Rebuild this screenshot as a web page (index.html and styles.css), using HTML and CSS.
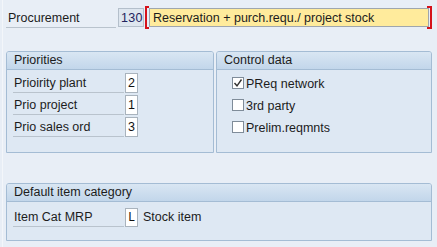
FILE: index.html
```html
<!DOCTYPE html>
<html lang="en">
<head>
  <meta charset="UTF-8">
  <title>MRP Group - Procurement</title>
  <link rel="stylesheet" href="styles.css">
</head>
<body>
  <div class="screen">
    <div class="proc-row">
      <span class="label proc-label">Procurement</span>
      <span class="field code">130</span>
      <span class="bracket left"></span>
      <span class="field required">Reservation + purch.requ./ project stock</span>
      <span class="bracket right"></span>
    </div>

    <div class="group-row">
      <div class="group priorities">
        <div class="group-head">Priorities</div>
        <div class="group-body">
          <div class="row"><span class="label">Prioirity plant</span><span class="field num">2</span></div>
          <div class="row"><span class="label">Prio project</span><span class="field num">1</span></div>
          <div class="row"><span class="label">Prio sales ord</span><span class="field num">3</span></div>
        </div>
      </div>

      <div class="group control">
        <div class="group-head">Control data</div>
        <div class="group-body">
          <div class="row">
            <span class="check on">
              <svg width="10" height="10" viewBox="0 0 10 10"><path d="M1.5 5 L4 7.8 L8.5 1.5" fill="none" stroke="#333" stroke-width="1.4"/></svg>
            </span>
            <span class="check-label">PReq network</span>
          </div>
          <div class="row"><span class="check"></span><span class="check-label">3rd party</span></div>
          <div class="row"><span class="check"></span><span class="check-label">Prelim.reqmnts</span></div>
        </div>
      </div>
    </div>

    <div class="group item-cat">
      <div class="group-head">Default item category</div>
      <div class="group-body">
        <div class="row">
          <span class="label">Item Cat MRP</span>
          <span class="field num mono">L</span>
          <span class="desc">Stock item</span>
        </div>
      </div>
    </div>
  </div>
</body>
</html>
```

FILE: styles.css
```css
* {
  margin: 0;
  padding: 0;
  box-sizing: border-box;
}

body {
  font-family: "Liberation Sans", Arial, sans-serif;
  font-size: 12.5px;
  color: #1c1c1c;
  background: #e8eef6;
  width: 437px;
  height: 247px;
  overflow: hidden;
}

.screen {
  margin-left: 2px;
  border-left: 1px solid #f3f6fa;
  padding: 6px 5px 0 3px;
  height: 247px;
}

/* top procurement line */
.proc-row {
  display: flex;
  align-items: center;
  height: 23px;
}

.label {
  display: flex;
  align-items: center;
  height: 20px;
  border-bottom: 1px solid #b9c3cd;
  padding-left: 2px;
}

.proc-label {
  width: 110px;
  margin-top: 1px;
}

.field {
  display: flex;
  align-items: center;
  height: 19px;
  border: 1px solid #b4bfcb;
}

.code {
  width: 26px;
  margin-left: 2px;
  padding-left: 2px;
  background: #dee6ef;
  color: #23235e;
  letter-spacing: 0.3px;
}

.required {
  flex: 1;
  background: #ffeb9c;
  border-color: #9fa6ad;
  padding-left: 3px;
}

.bracket {
  width: 4px;
  height: 23px;
  border: 2px solid #d5121b;
}

.bracket.left {
  border-right: none;
  margin-left: 1px;
}

.bracket.right {
  border-left: none;
  margin-left: -2px;
  width: 5px;
}

/* group boxes */
.group {
  background: #dee8f3;
  border: 1px solid #a4bcd4;
  border-radius: 3px 3px 0 0;
}

.group-head {
  height: 18px;
  padding-left: 7px;
  line-height: 17px;
  background: linear-gradient(#d9e6f3, #c2d6ea);
  border-bottom: 1px solid #a4bcd4;
  border-radius: 2px 2px 0 0;
}

.group-row {
  display: flex;
  gap: 2px;
  margin-top: 22px;
}

.priorities {
  width: 208px;
  height: 102px;
}

.control {
  flex: 1;
  height: 102px;
}

.group-body {
  padding: 3px 0 0 6px;
  display: flex;
  flex-direction: column;
  gap: 2px;
}

.row {
  display: flex;
  align-items: flex-end;
  height: 20px;
}

.row .label {
  width: 111px;
  padding-left: 1px;
}

.num {
  width: 13px;
  height: 20px;
  margin-left: 1px;
  justify-content: center;
  background: #fff;
  border-color: #a9b3bd;
  color: #111;
}

.mono {
  font-family: "Liberation Mono", "Courier New", monospace;
  font-size: 12px;
  height: 19px;
}

/* checkboxes */
.control .group-body {
  padding-left: 15px;
}

.control .row {
  align-items: center;
}

.check {
  width: 12px;
  height: 12px;
  margin-right: 2px;
  background: #fff;
  border: 1px solid #7f8c99;
  display: flex;
  align-items: center;
  justify-content: center;
}

.check-label {
  padding-top: 1px;
}

/* default item category */
.item-cat {
  margin-top: 30px;
  height: 58px;
}

.item-cat .group-body {
  padding-top: 5px;
}

.desc {
  align-self: center;
  margin-left: 5px;
}
```
